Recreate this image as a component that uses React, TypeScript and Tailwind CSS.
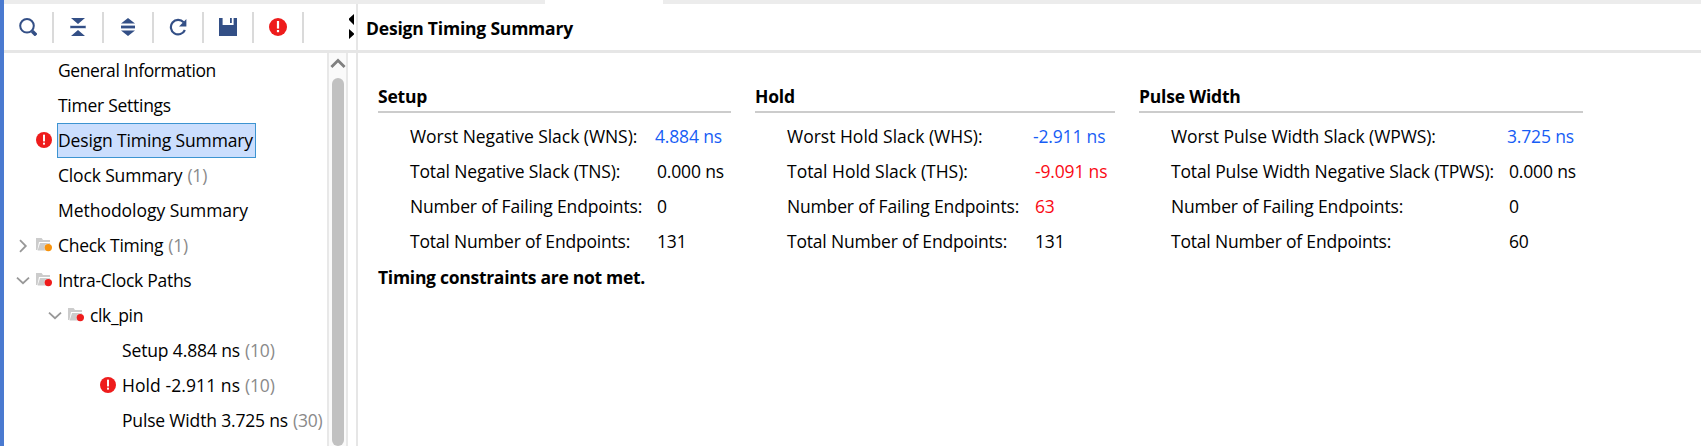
import type { ReactNode } from "react";

function ErrorIcon({ className }: { className: string }) {
  return (
    <svg viewBox="0 0 18 18" className={className}>
      <circle cx="9" cy="9" r="9" fill="#ee1c1c" />
      <rect x="7.9" y="3" width="2.2" height="7.6" fill="#fff" />
      <rect x="7.9" y="12" width="2.2" height="2.2" fill="#fff" />
    </svg>
  );
}

function SearchIcon() {
  return (
    <svg viewBox="0 0 18 18" className="size-[18px]">
      <circle cx="8" cy="7.8" r="6.8" fill="none" stroke="#334f86" strokeWidth="2" />
      <path d="M13.2 13.2l4 4" stroke="#334f86" strokeWidth="3.6" />
    </svg>
  );
}

function CollapseIcon() {
  return (
    <svg viewBox="0 0 16 18" className="h-[18px] w-4">
      <path d="M1 0h14L8 6zM1 18h14L8 12z" fill="#334f86" />
      <path d="M0 7.5h16v3H0z" fill="#aab8d2" />
      <path d="M.5 8h15v2H.5z" fill="#334f86" />
    </svg>
  );
}

function ExpandIcon() {
  return (
    <svg viewBox="0 0 14 18" className="h-[18px] w-3.5">
      <path d="M0 5.5 7 0l7 5.5zM0 12.5 7 18l7-5.5z" fill="#334f86" />
      <path d="M0 7h14v4H0z" fill="#aab8d2" />
      <path d="M0 8h14v2H0z" fill="#334f86" />
    </svg>
  );
}

function ReloadIcon() {
  return (
    <svg viewBox="0 0 18 18" className="size-[18px]">
      <path d="M14.6 4.2A7.3 7.3 0 1 0 15.9 12" fill="none" stroke="#334f86" strokeWidth="2.2" />
      <path d="M17.4 1v7.4H10z" fill="#334f86" />
    </svg>
  );
}

function SaveIcon() {
  return (
    <svg viewBox="0 0 18 18" className="size-[18px]">
      <path d="M0 0h3.6v7h11V0H18v18H0z" fill="#334f86" />
      <path d="M11 0h1.8v5H11z" fill="#334f86" />
    </svg>
  );
}

function FolderIcon({ dot }: { dot: string }) {
  return (
    <svg viewBox="0 0 16 16" className="size-4 shrink-0">
      <path d="M0 1h5.6l1.4 2h7v2H3L1.4 13H0z" fill="#cccccc" />
      <path d="M4 6h10v7.5H1.6z" fill="#cccccc" />
      <circle cx="12.3" cy="10.6" r="4.2" fill="#fff" opacity=".5" />
      <circle cx="12.3" cy="10.6" r="3.7" fill={dot} />
    </svg>
  );
}

function Chevron({ open }: { open?: boolean }) {
  return (
    <svg viewBox="0 0 14 14" className="size-3.5 shrink-0">
      <path
        d={open ? "M1 3.6l6 5.6 6-5.6" : "M4 1.2l5.8 5.8L4 12.8"}
        fill="none"
        stroke="#989898"
        strokeWidth="1.8"
      />
    </svg>
  );
}

type Node = {
  label: string;
  track: string;
  count?: string;
  indent: string;
  chevron?: "open" | "closed";
  icon?: ReactNode;
  selected?: boolean;
};

const error = <ErrorIcon className="size-4" />;

const nodes: Node[] = [
  { label: "General Information", track: "tracking-[-0.43px]", indent: "pl-[11px]" },
  { label: "Timer Settings", track: "tracking-[-0.27px]", indent: "pl-[11px]" },
  { label: "Design Timing Summary", track: "tracking-[-0.14px]", indent: "pl-[11px]", icon: error, selected: true },
  { label: "Clock Summary", track: "tracking-[-0.16px]", count: "(1)", indent: "pl-[11px]" },
  { label: "Methodology Summary", track: "tracking-[-0.03px]", indent: "pl-[11px]" },
  { label: "Check Timing", track: "tracking-[-0.28px]", count: "(1)", indent: "pl-[11px]", chevron: "closed", icon: <FolderIcon dot="#f7930d" /> },
  { label: "Intra-Clock Paths", track: "tracking-[-0.27px]", indent: "pl-[11px]", chevron: "open", icon: <FolderIcon dot="#ee1c1c" /> },
  { label: "clk_pin", track: "tracking-[-0.35px]", indent: "pl-[43px]", chevron: "open", icon: <FolderIcon dot="#ee1c1c" /> },
  { label: "Setup 4.884 ns", track: "tracking-[-0.13px]", count: "(10)", indent: "pl-[75px]" },
  { label: "Hold -2.911 ns", track: "tracking-[0.08px]", count: "(10)", indent: "pl-[75px]", icon: error },
  { label: "Pulse Width 3.725 ns", track: "tracking-[-0.17px]", count: "(30)", indent: "pl-[75px]" },
];

function TreeRow({ node }: { node: Node }) {
  return (
    <div className={`flex h-[35px] items-center ${node.indent}`}>
      <span className="flex w-[21px] shrink-0 pl-[1px]">
        {node.chevron && <Chevron open={node.chevron === "open"} />}
      </span>
      <span className="flex w-[21px] shrink-0 pb-[1px]">{node.icon}</span>
      <span
        className={`h-[35px] border pr-[2px] leading-[33px] ${node.track} ${
          node.selected ? "border-[#3d94d1] bg-[#cbdefd]" : "border-transparent"
        }`}
      >
        {node.label}
      </span>
      {node.count && (
        <span className="pl-[2px] leading-[35px] tracking-[-0.2px] text-[#8a8a8a]">{node.count}</span>
      )}
    </div>
  );
}

type Metric = { label: string; track: string; value: string; tone?: string };

function Section({ title, width, rows, cols }: { title: string; width: string; rows: Metric[]; cols: string }) {
  return (
    <section className={width}>
      <h2 className="h-[33px] border-b-2 border-[#cccccc] leading-[33px] font-bold tracking-[-0.2px]">
        {title}
      </h2>
      <div className="pt-[6px] pl-8">
        {rows.map((r) => (
          <div key={r.label} className={`grid h-[35px] leading-[35px] ${cols}`}>
            <span className={r.track}>{r.label}</span>
            <span className={`tracking-[-0.17px] ${r.tone ?? "pl-[2px]"}`}>{r.value}</span>
          </div>
        ))}
      </div>
    </section>
  );
}

const failing = "Number of Failing Endpoints:";
const total = "Total Number of Endpoints:";
const blue = "text-[#175df5]";
const red = "pl-[2px] text-[#fa0a14]";

const setup: Metric[] = [
  { label: "Worst Negative Slack (WNS):", track: "tracking-[-0.05px]", value: "4.884 ns", tone: blue },
  { label: "Total Negative Slack (TNS):", track: "tracking-[-0.15px]", value: "0.000 ns" },
  { label: failing, track: "tracking-[-0.17px]", value: "0" },
  { label: total, track: "tracking-[-0.19px]", value: "131" },
];
const hold: Metric[] = [
  { label: "Worst Hold Slack (WHS):", track: "tracking-[0px]", value: "-2.911 ns", tone: blue },
  { label: "Total Hold Slack (THS):", track: "tracking-[-0.01px]", value: "-9.091 ns", tone: red },
  { label: failing, track: "tracking-[-0.17px]", value: "63", tone: red },
  { label: total, track: "tracking-[-0.19px]", value: "131" },
];
const pulse: Metric[] = [
  { label: "Worst Pulse Width Slack (WPWS):", track: "tracking-[-0.08px]", value: "3.725 ns", tone: blue },
  { label: "Total Pulse Width Negative Slack (TPWS):", track: "tracking-[-0.15px]", value: "0.000 ns" },
  { label: failing, track: "tracking-[-0.17px]", value: "0" },
  { label: total, track: "tracking-[-0.19px]", value: "60" },
];

const tools = [
  <SearchIcon />,
  <CollapseIcon />,
  <ExpandIcon />,
  <ReloadIcon />,
  <SaveIcon />,
  <ErrorIcon className="size-[18px]" />,
];

export default function App() {
  return (
    <div className="flex h-[446px] w-[1701px] overflow-hidden bg-white font-['Open_Sans',sans-serif] text-[17.5px] whitespace-nowrap text-black">
      <div className="w-1 shrink-0 bg-[#4a7ad0]" />
      <div className="flex min-w-0 flex-1 flex-col">
        <div className="flex h-1 shrink-0">
          <div className="w-[541px] bg-[#ececec]" />
          <div className="w-[118px]" />
          <div className="flex-1 bg-[#ececec]" />
        </div>
        <div className="flex min-h-0 flex-1">
          <aside className="flex w-[354px] shrink-0 flex-col border-r-2 border-[#e6e6e6]">
            <div className="flex h-[49px] shrink-0 items-center justify-between border-b-[3px] border-[#e6e6e6]">
              <div className="flex">
                {tools.map((icon, i) => (
                  <div key={i} className="flex h-[31px] w-[50px] items-center justify-center border-r-2 border-[#dadada]">
                    {icon}
                  </div>
                ))}
              </div>
              <svg viewBox="0 0 6 26" className="mr-[1px] h-[26px] w-[6px]">
                <path d="M5 0v11L0 6V4.5zM0 15l5 4.5v1L0 25z" fill="#000" />
              </svg>
            </div>
            <div className="flex min-h-0 flex-1">
              <nav className="w-[323px] shrink-0 overflow-hidden">
                {nodes.map((n) => (
                  <TreeRow key={n.label} node={n} />
                ))}
              </nav>
              <div className="flex w-[21px] shrink-0 flex-col items-center border-x-2 border-[#e8e8e8] bg-[#fafafa]">
                <svg viewBox="0 0 16 12" className="mt-[4px] h-3 w-4 shrink-0">
                  <path d="M1.4 10 8 3.4l6.6 6.6" fill="none" stroke="#808080" strokeWidth="2.8" />
                </svg>
                <div className="mt-[9px] w-3 flex-1 rounded-full bg-[#c1c1c1]" />
              </div>
            </div>
          </aside>
          <main className="flex flex-1 flex-col">
            <h1 className="h-[49px] shrink-0 border-b-[3px] border-[#e6e6e6] pl-2 leading-[48px] font-bold tracking-[-0.2px]">
              Design Timing Summary
            </h1>
            <div className="pt-[27px] pl-5">
              <div className="flex gap-6">
                <Section title="Setup" width="w-[353px]" rows={setup} cols="grid-cols-[245px_1fr]" />
                <Section title="Hold" width="w-[360px]" rows={hold} cols="grid-cols-[246px_1fr]" />
                <Section title="Pulse Width" width="w-[444px]" rows={pulse} cols="grid-cols-[336px_1fr]" />
              </div>
              <p className="pt-[1px] leading-[35px] font-bold tracking-[-0.28px]">Timing constraints are not met.</p>
            </div>
          </main>
        </div>
      </div>
    </div>
  );
}
